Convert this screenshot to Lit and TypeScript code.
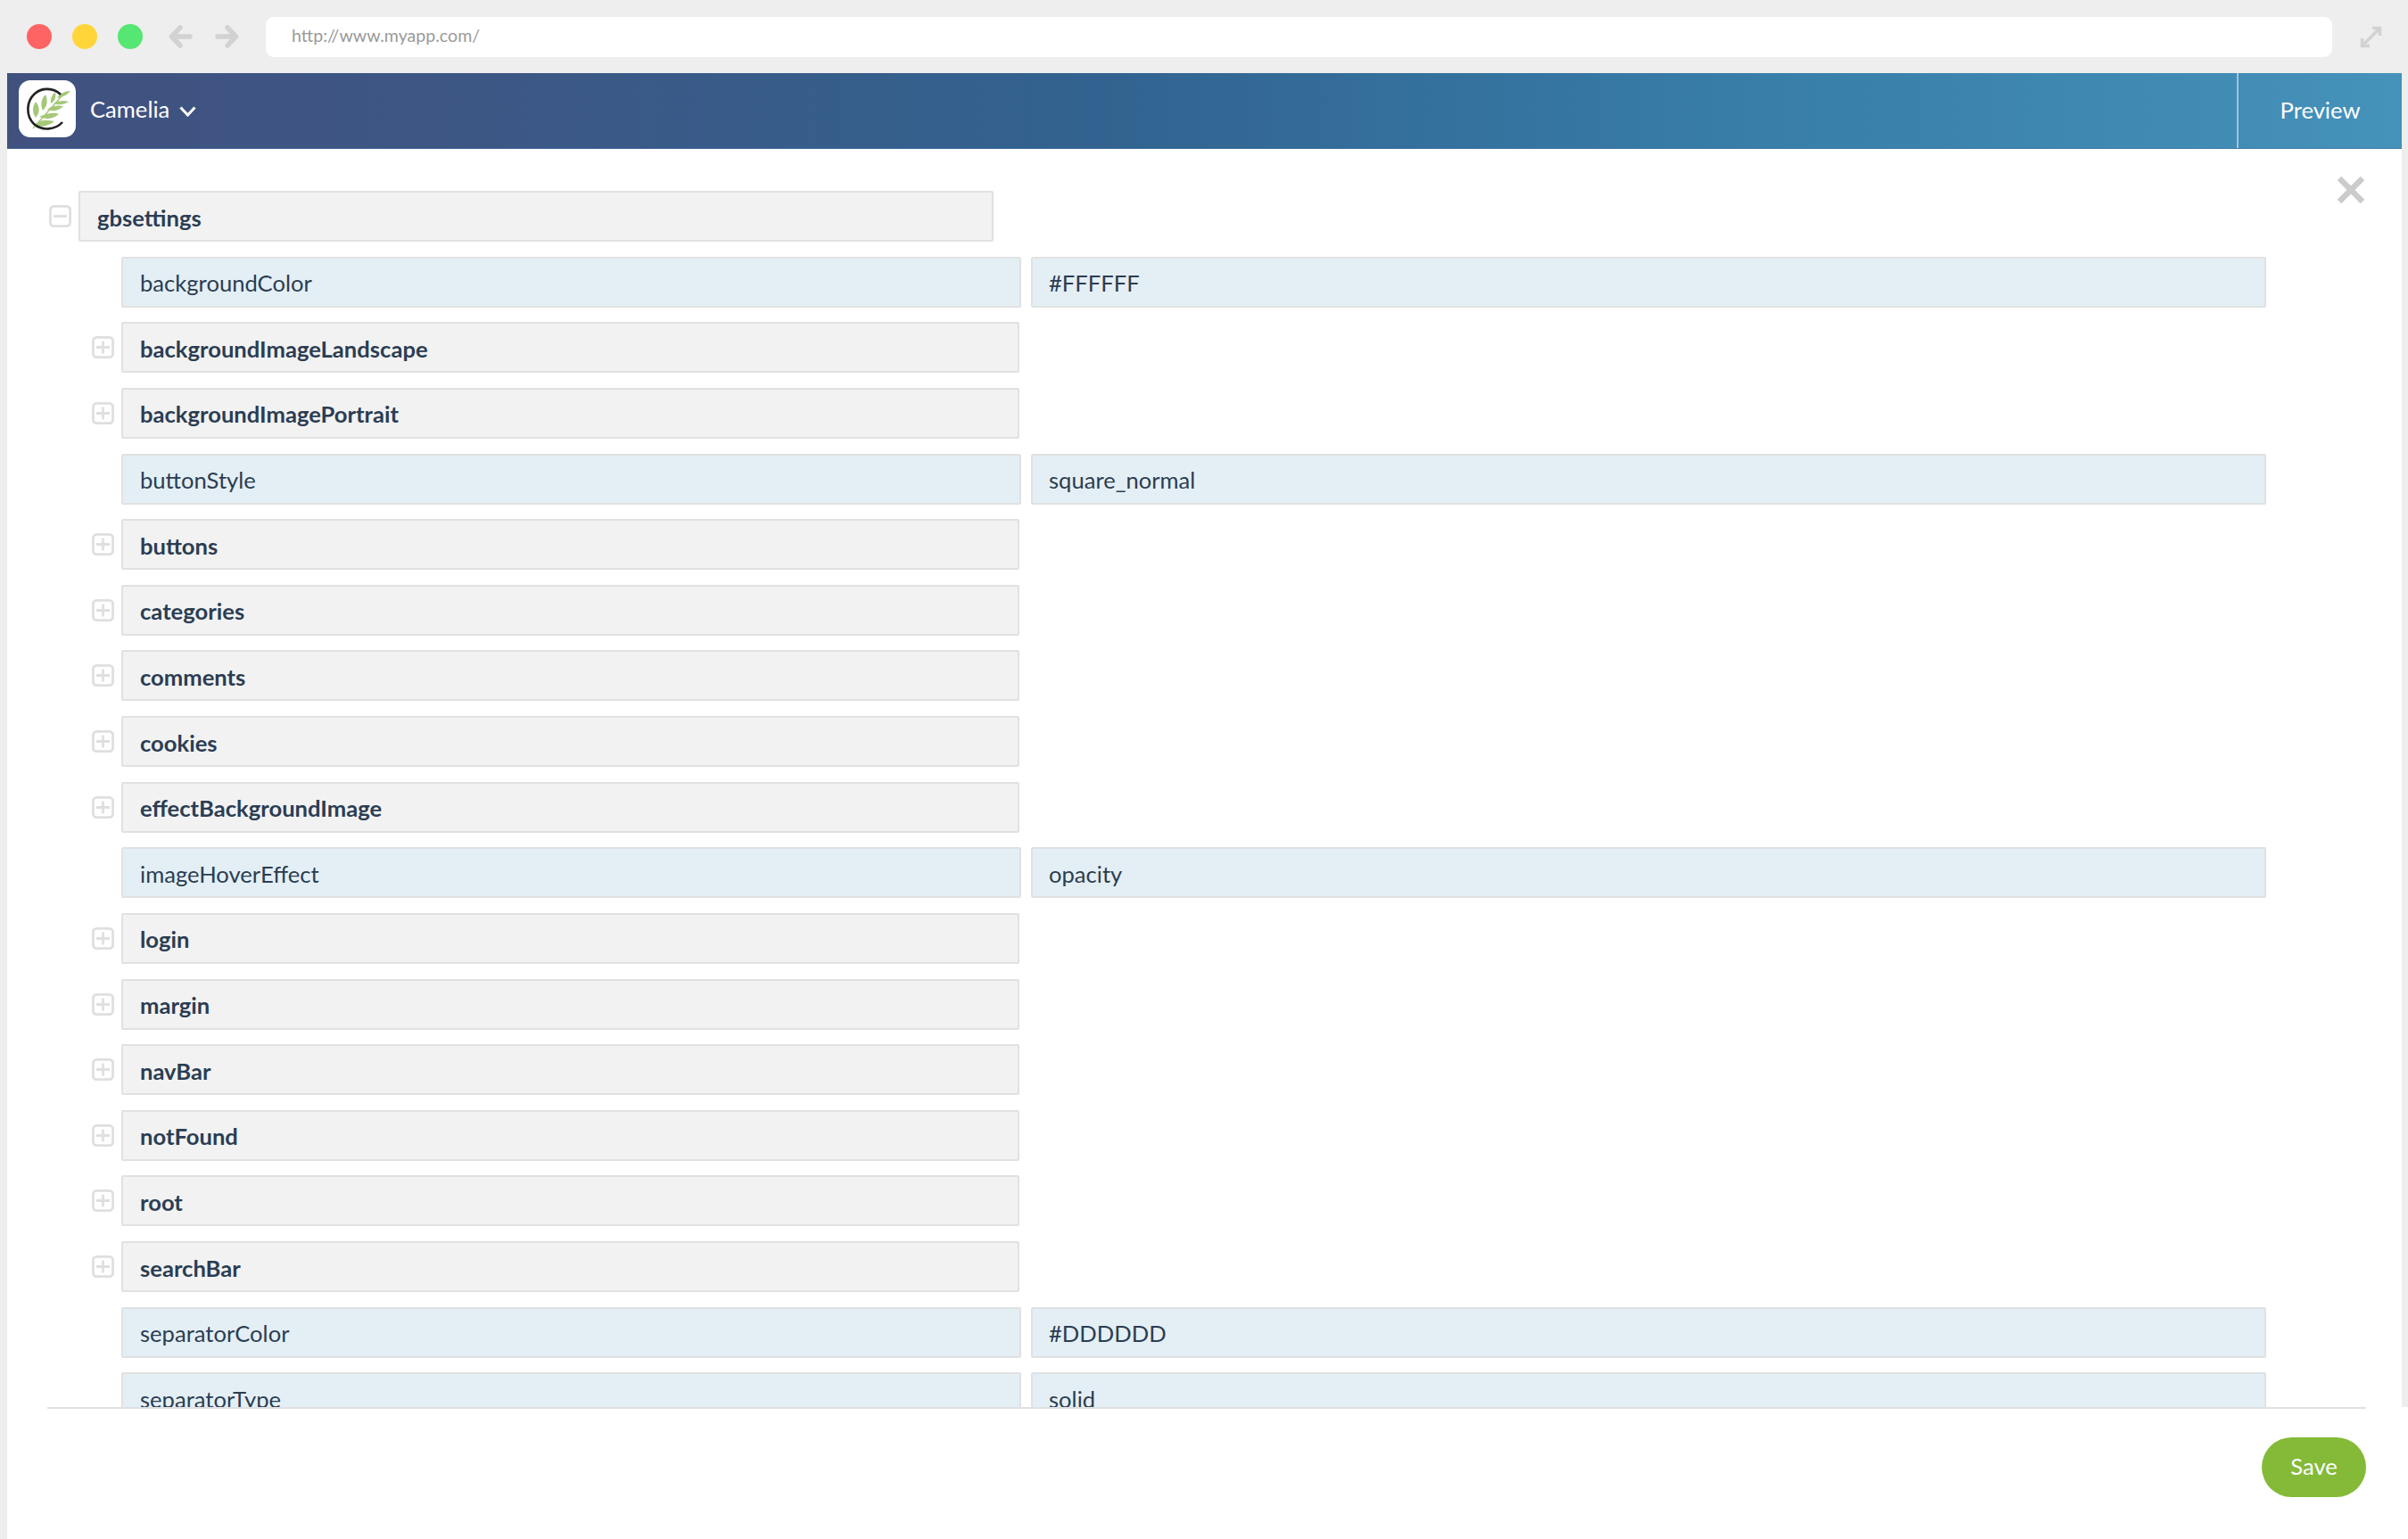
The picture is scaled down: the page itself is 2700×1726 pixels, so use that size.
import { LitElement, html, css } from "lit";
import { customElement } from "lit/decorators.js";

type Row = { k: string; v?: string };
const rows: Row[] = [
  { k: "backgroundColor", v: "#FFFFFF" },
  { k: "backgroundImageLandscape" },
  { k: "backgroundImagePortrait" },
  { k: "buttonStyle", v: "square_normal" },
  { k: "buttons" },
  { k: "categories" },
  { k: "comments" },
  { k: "cookies" },
  { k: "effectBackgroundImage" },
  { k: "imageHoverEffect", v: "opacity" },
  { k: "login" },
  { k: "margin" },
  { k: "navBar" },
  { k: "notFound" },
  { k: "root" },
  { k: "searchBar" },
  { k: "separatorColor", v: "#DDDDDD" },
  { k: "separatorType", v: "solid" },
];

@customElement("app-root")
export class AppRoot extends LitElement {
  static styles = css`
    :host {
      display: block;
      height: 1726px;
      background: #eeeeee;
      font-family: Lato, "Liberation Sans", sans-serif;
      color: #2b3d52;
      font-size: 25.6px;
      overflow: hidden;
    }
    .chrome {
      height: 82px;
      display: flex;
      align-items: center;
      padding: 0 30px 0 30px;
      box-sizing: border-box;
    }
    .dot {
      width: 28px;
      height: 28px;
      border-radius: 50%;
      margin-right: 23px;
      flex: none;
    }
    .red { background: #ff6464; }
    .yellow { background: #ffd53a; }
    .green { background: #55e673; }
    .nav { display: flex; gap: 25px; margin-left: 6px; }
    .nav svg { display: block; }
    .address {
      margin-left: 30px;
      width: 2317px;
      height: 45px;
      background: #fff;
      border-radius: 9px;
      display: flex;
      align-items: center;
      padding: 0 0 3px 29px;
      box-sizing: border-box;
      font-size: 19.6px;
      color: #9a9a9a;
      flex: none;
    }
    .expand { margin-left: 31px; flex: none; display: block; }
    .window {
      margin: 0 7px 0 8px;
      height: 1644px;
      background: #fff;
      display: flex;
      flex-direction: column;
      position: relative;
    }
    .header {
      height: 85px;
      flex: none;
      display: flex;
      align-items: center;
      background: linear-gradient(90deg, #40517f 0%, #3d5785 20%, #32628f 45%, #377da8 72%, #4592ba 100%);
      color: #fff;
      box-sizing: border-box;
      border-bottom: 1px solid rgba(60, 110, 160, 0.6);
    }
    .logo {
      width: 64px;
      height: 64px;
      margin: 0 0 4px 13px;
      background: #fff;
      border-radius: 13px;
      flex: none;
      display: block;
    }
    .brand { margin: 0 0 5px 16px; display: flex; align-items: center; gap: 11px; flex: 1; }
    .brand svg { display: block; margin-top: 6px; }
    .preview {
      width: 185px;
      height: 100%;
      flex: none;
      display: flex;
      align-items: center;
      justify-content: center;
      border-left: 2px solid #9cc6dc;
      box-sizing: border-box;
      padding-bottom: 2px;
    }
    .body {
      flex: 1;
      min-height: 0;
      overflow: hidden;
      padding: 47px 0 0 47px;
      display: flex;
      flex-direction: column;
      gap: 16.625px;
    }
    .close { position: absolute; right: 42px; top: 116px; display: block; }
    .row { display: flex; align-items: center; flex: none; height: 57px; }
    .child { padding-left: 48px; }
    .toggle {
      width: 25px;
      height: 25px;
      flex: none;
      margin-right: 8px;
      display: block;
    }
    .cell {
      height: 57px;
      box-sizing: border-box;
      border: 2px solid #e1e1e1;
      border-radius: 2px;
      display: flex;
      align-items: center;
      padding: 2px 0 0 19px;
      flex: none;
      white-space: nowrap;
    }
    .group { background: #f2f2f2; font-weight: 700; width: 1007px; }
    .top { width: 1026px; }
    .leaf { background: #e4eff5; border-color: #dfe1e2; }
    .key { width: 1009px; }
    .val { width: 1385px; margin-left: 11px; padding-left: 18px; }
    .footer {
      flex: none;
      height: 148px;
      margin-right: -7px;
      background: #fff;
      position: relative;
      display: flex;
      flex-direction: column;
    }
    .rule { height: 2px; background: #dfe1e2; margin: 0 47px 0 45px; flex: none; }
    .actions { display: flex; justify-content: flex-end; padding: 32px 47px 0 0; }
    .save {
      width: 117px;
      height: 67px;
      box-sizing: border-box;
      padding-bottom: 3px;
      border-radius: 34px;
      background: #84ba38;
      color: #fff;
      display: flex;
      align-items: center;
      justify-content: center;
    }
  `;

  private toggle(open = false) {
    return html`<svg class="toggle" viewBox="0 0 25 25" fill="none" stroke="#dfdfdf" stroke-width="2.8">
      <rect x="1.4" y="1.4" width="22.2" height="22.2" rx="4"></rect>
      <path d=${open ? "M5 12.5H20" : "M5 12.5H20M12.5 5.5V19.5"}></path>
    </svg>`;
  }

  private row(r: Row) {
    if (r.v !== undefined) {
      return html`<div class="row child">
        <svg class="toggle"></svg>
        <div class="cell leaf key">${r.k}</div>
        <div class="cell leaf val">${r.v}</div>
      </div>`;
    }
    return html`<div class="row child">
      ${this.toggle()}
      <div class="cell group">${r.k}</div>
    </div>`;
  }

  render() {
    return html`
      <div class="chrome">
        <div class="dot red"></div>
        <div class="dot yellow"></div>
        <div class="dot green"></div>
        <div class="nav">
          <svg width="27" height="28" viewBox="0 0 27 28" fill="none" stroke="#d2d2d2" stroke-width="5.5" stroke-linecap="round" stroke-linejoin="round"><path d="M24 14H5M13 4L3.5 14L13 24"></path></svg>
          <svg width="27" height="28" viewBox="0 0 27 28" fill="none" stroke="#d2d2d2" stroke-width="5.5" stroke-linecap="round" stroke-linejoin="round"><path d="M3 14H22M14 4L23.5 14L14 24"></path></svg>
        </div>
        <div class="address">http://www.myapp.com/</div>
        <svg class="expand" width="25" height="25" viewBox="0 0 25 25" fill="none" stroke="#d2d2d2" stroke-width="3.5"><path d="M14 2.5H22.5V11M22.5 2.5L2.5 22.5M2.5 14V22.5H11"></path></svg>
      </div>
      <div class="window">
        <div class="header">
          <svg class="logo" viewBox="0 0 64 64">
            <g fill="#a5c878">
              <path d="M18 50C22 45 28 44 40 46C33 52 24 53 18 50Z"></path>
              <path d="M19 42C15 36 15 30 19 24C24 30 24 36 19 42Z"></path>
              <path d="M23 41C34 36 40 36 45 38C38 44 30 44 23 41Z"></path>
              <path d="M27 34C24 28 25 21 30 16C33 23 32 29 27 34Z"></path>
              <path d="M32 33C38 28 44 28 50 29C44 35 38 35 32 33Z"></path>
              <path d="M36 26C35 21 37 17 41 13C42 19 41 23 36 26Z"></path>
              <path d="M39 26C45 23 50 22 56 24C50 28 45 28 39 26Z"></path>
              <path d="M43 20C44 17 50 12 58 12C54 17 49 19 43 20Z"></path>
              <path d="M16 54L48 18" stroke="#a5c878" stroke-width="1.5"></path>
            </g>
            <path d="M47 16C39 8 26 8 18 15C8 24 8 40 17 49C26 57 41 56 49 47" fill="none" stroke="#222" stroke-width="2.6"></path>
          </svg>
          <div class="brand">
            <span>Camelia</span>
            <svg width="19" height="12" viewBox="0 0 19 12" fill="none" stroke="#fff" stroke-width="3"><path d="M1.5 1.5L9.5 10L17.5 1.5"></path></svg>
          </div>
          <div class="preview">Preview</div>
        </div>
        <svg class="close" width="30" height="30" viewBox="0 0 30 30" fill="none" stroke="#cbcbcb" stroke-width="6.5"><path d="M2 2L28 28M28 2L2 28"></path></svg>
        <div class="body">
          <div class="row">
            ${this.toggle(true)}
            <div class="cell group top">gbsettings</div>
          </div>
          ${rows.map((r) => this.row(r))}
        </div>
        <div class="footer">
          <div class="rule"></div>
          <div class="actions"><div class="save">Save</div></div>
        </div>
      </div>
    `;
  }
}
